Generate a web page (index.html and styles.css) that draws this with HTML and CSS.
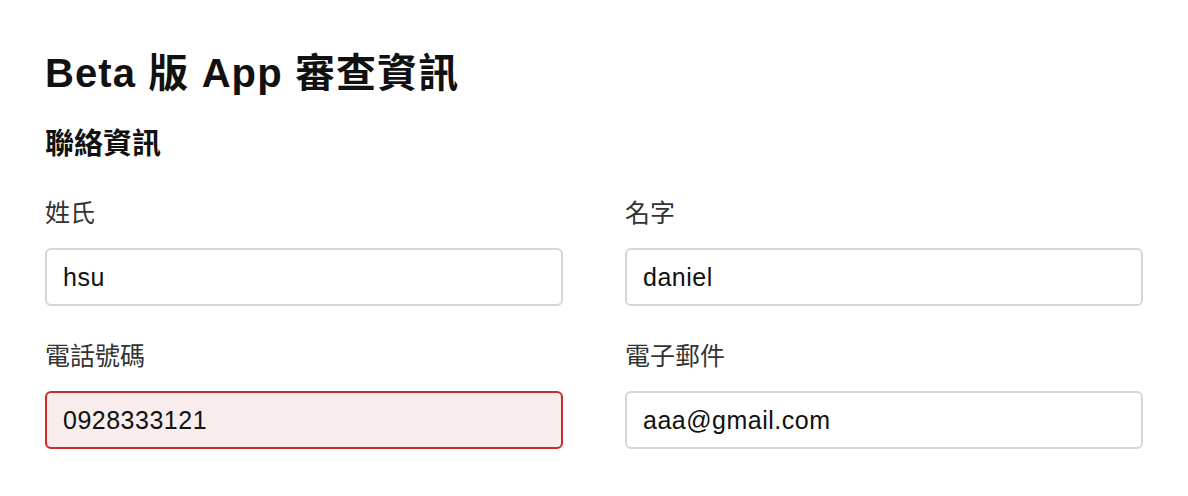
FILE: index.html
```html
<!DOCTYPE html>
<html lang="zh-Hant">
  <head>
    <meta charset="utf-8" />
    <meta name="viewport" content="width=device-width, initial-scale=1" />
    <title>Beta 版 App 審查資訊</title>
    <link rel="stylesheet" href="styles.css">
  </head>
  <body>
    <div class="page">
      <h1 class="title">Beta 版 App 審查資訊</h1>
      <h2 class="section">聯絡資訊</h2>

      <div class="fields">
        <div class="field">
          <label for="last">姓氏</label>
          <input id="last" type="text" value="hsu">
        </div>
        <div class="field">
          <label for="first">名字</label>
          <input id="first" type="text" value="daniel">
        </div>
        <div class="field">
          <label for="phone">電話號碼</label>
          <input id="phone" class="invalid" type="text" value="0928333121">
        </div>
        <div class="field">
          <label for="email">電子郵件</label>
          <input id="email" type="text" value="aaa@gmail.com">
        </div>
      </div>
    </div>
  </body>
</html>
```

FILE: styles.css
```css
* {
  box-sizing: border-box;
  margin: 0;
  padding: 0;
}

body {
  font-family: "Liberation Sans", "Noto Sans CJK TC", sans-serif;
  background-color: #fff;
  color: #111;
}

.page {
  padding: 49px 45px 20px;
}

.title {
  font-size: 40px;
  line-height: 48px;
  font-weight: bold;
  letter-spacing: 1.1px;
  color: #111;
}

.section {
  margin-top: 30px;
  font-size: 29px;
  line-height: 35px;
  font-weight: bold;
  color: #111;
}

.fields {
  margin-top: 36px;
  display: grid;
  grid-template-columns: 1fr 1fr;
  column-gap: 62px;
  row-gap: 35px;
}

.field label {
  display: block;
  font-size: 25px;
  line-height: 30px;
  color: #333;
  margin-bottom: 20px;
}

.field input {
  display: block;
  width: 100%;
  height: 58px;
  padding: 0 16px;
  font-family: "Liberation Sans", "Noto Sans CJK TC", sans-serif;
  font-size: 25px;
  letter-spacing: 0.5px;
  color: #111;
  background-color: #fff;
  border: 2px solid #d6d6d6;
  border-radius: 6px;
  outline: none;
}

.field input.invalid {
  background-color: #f8ecec;
  border-color: #c92a2a;
}
```
